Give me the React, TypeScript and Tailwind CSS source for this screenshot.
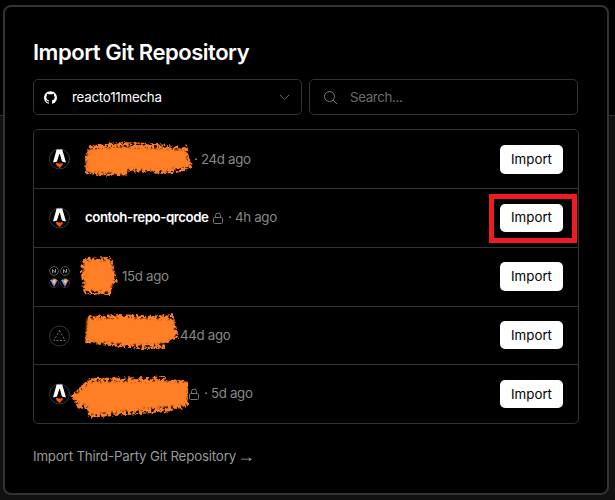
import React from "react";
import { SiGithub } from "react-icons/si";

function AstroIcon() {
  return (
    <svg width="21" height="22" viewBox="0 0 21 22" className="shrink-0">
      <circle cx="10.5" cy="11" r="10" fill="#000" stroke="#3a3a3a" />
      <path
        d="M7.600 1.600h5.600L17 14.600q-2-1-4-1.200L10.900 6h-.6L8 13.400q-2 .2-4 1.200z"
        fill="#fff"
      />
      <path d="M7 14.800q1.700.9 3.500.8t3.300-.9q.3 2.300-1.500 3.300-1 .7-1.200 2.400-1-.9-1.500-1.600-2.700-1-2.600-4z" fill="#ff5d01" />
    </svg>
  );
}

function NextDot() {
  return (
    <svg width="10" height="10" viewBox="0 0 10 10">
      <circle cx="5" cy="5" r="4.400" fill="#000" stroke="#555" />
      <path d="M3.500 7V3.500L6.500 7M6.500 3V6" fill="none" stroke="#aaa" strokeWidth=".9" />
    </svg>
  );
}

function ViteDot() {
  return (
    <svg width="10" height="10" viewBox="0 0 10 10">
      <circle cx="5" cy="5" r="4.500" fill="#000" stroke="#333" />
      <path d="M1.300 2 5 1.500 8.700 2 5 9z" fill="#b06bff" />
      <path d="M1.300 2 4 1.700 4.500 7.500z" fill="#62a8f5" />
      <path d="M4 1.500 6.800 1 6.500 4.200 5 6.200V5H4z" fill="#ffc928" />
    </svg>
  );
}

function WorkspaceIcon() {
  return (
    <div className="grid w-[21px] shrink-0 grid-cols-2 gap-x-px gap-y-0.5">
      <NextDot />
      <NextDot />
      <ViteDot />
      <ViteDot />
    </div>
  );
}

function EmptyIcon() {
  return (
    <svg width="21" height="22" viewBox="0 0 21 22" className="shrink-0">
      <circle cx="10.500" cy="11" r="10" fill="#000" stroke="#383838" />
      <path d="M10.500 5.500 16 15.500H5z" fill="none" stroke="#777" strokeDasharray="2 1.600" />
    </svg>
  );
}

function LockIcon() {
  return (
    <svg width="12" height="13" viewBox="0 0 12 13" fill="none" stroke="#777" className="shrink-0">
      <rect x="1.500" y="5.500" width="9" height="6" rx="1" />
      <path d="M3.500 5.500V3.500a2.500 2.500 0 0 1 5 0V5.500" />
    </svg>
  );
}

type Row = {
  icon: React.ReactNode;
  name?: string;
  locked?: boolean;
  gap: string;
  time: string;
  height: string;
  button: string;
  marked?: boolean;
};

const rows: Row[] = [
  { icon: <AstroIcon />, gap: "pt-px pl-[124px]", time: "· 24d ago", height: "h-[59px]", button: "h-[29px]" },
  { icon: <AstroIcon />, name: "contoh-repo-qrcode", locked: true, gap: "pl-[15px]", time: "· 4h ago", height: "h-[59px]", button: "mb-px h-[28px]", marked: true },
  { icon: <WorkspaceIcon />, gap: "pl-[52px]", time: "15d ago", height: "h-[59px]", button: "mb-px h-[29px]" },
  { icon: <EmptyIcon />, gap: "pl-[110px]", time: "44d ago", height: "h-[58px]", button: "mb-px h-[28px]" },
  { icon: <AstroIcon />, locked: true, gap: "pl-[118px]", time: "· 5d ago", height: "h-[58px]", button: "h-[28px]" },
];

function RepoRow({ row }: { row: Row }) {
  return (
    <div className={`flex items-center border-b border-[#333] pr-[15px] pl-[15px] last:border-b-0 ${row.height}`}>
      {row.icon}
      <div className={`flex items-center whitespace-nowrap ${row.gap}`}>
        {row.name && (
          <span className="mr-[3px] w-[124px] text-[13.3px] font-semibold tracking-[-0.46px] text-white">{row.name}</span>
        )}
        {row.locked && (
          <span className="mr-1">
            <LockIcon />
          </span>
        )}
        <span className="text-[13.3px] tracking-[-0.32px] text-[#888]">{row.time}</span>
      </div>
      <div className="relative ml-auto">
        <button className={`block w-[63px] rounded-[5px] bg-white text-[13.3px] leading-[27px] text-black ${row.button}`}>
          Import
        </button>
        {row.marked && <div className="absolute -top-[10px] -left-[11px] h-[49px] w-[88px] border-[5px] border-[#ed1c24]" />}
      </div>
    </div>
  );
}

/* Spray-brush strokes that hide private repository names. */
function Redactions() {
  return (
    <svg width="615" height="500" viewBox="0 0 615 500" className="pointer-events-none absolute top-0 left-0">
      <defs>
        <filter id="spray" x="-10%" y="-10%" width="120%" height="120%">
          <feTurbulence type="fractalNoise" baseFrequency=".35" numOctaves="2" seed="6" result="noise" />
          <feDisplacementMap in="SourceGraphic" in2="noise" scale="4" xChannelSelector="R" yChannelSelector="G" result="rough" />
          <feColorMatrix in="noise" type="matrix" values="0 0 0 0 0  0 0 0 0 0  0 0 0 0 0  0 0 8 0 -3" result="grain" />
          <feComposite in="rough" in2="grain" operator="in" result="porous" />
          <feGaussianBlur in="porous" stdDeviation=".6" />
        </filter>
        <filter id="soft">
          <feGaussianBlur stdDeviation=".8" />
        </filter>
      </defs>
      <g fill="#ff7f27" filter="url(#spray)">
        <path d="M90 145 120 142 150 143 182 147 187 145 192 168 182 172 165 174 127 172V176L110 176 86 174 85 156z" />
        <path d="M84 258 110 257 113 263 115 273 118 282 111 285V295L96 295 84 294 81 275V268z" />
        <path d="M88 315 120 314 150 316 173 314 179 337 165 345V349L140 349 110 346 85 343 87 328z" />
        <path d="M90 378 150 377 165 376V380L188 380V407L165 412 140 414 88 418V409L78 409 71 396 83 384z" />
      </g>
      <g fill="#ff7f27" filter="url(#soft)">
        <path d="M90 149 120 147 185 150 189 166 165 170 127 169 126 175 110 173 87 172 86 157z" />
        <path d="M84 261 109 260 113 266 114 280 110 292 86 290 83 273z" />
        <path d="M87 319 120 318 172 319 176 335 163 343 140 345 86 341z" />
        <path d="M90 382 165 381 187 383V405L140 409 89 415 88 406 78 403 74 396 85 386z" />
      </g>
    </svg>
  );
}

export default function App() {
  return (
    <div className="relative h-[500px] w-[615px] overflow-hidden bg-black bg-[linear-gradient(#000_115px,#333_115px,#333_116px,#111_116px)] pt-[5px] pl-[3px] font-['Inter','Liberation_Sans',sans-serif]">
      <main className="h-[490px] w-[606px] rounded-[8px] border-2 border-[#333] bg-black px-[28px] pt-[29px]">
        <h1 className="h-[43px] text-[22px] leading-[32px] font-semibold tracking-[-0.47px] text-white">Import Git Repository</h1>
        <div className="flex gap-[7px]">
          <div className="flex h-[36px] w-[269px] items-center rounded-[5px] border border-[#333] pr-[11px] pl-[10px]">
            <SiGithub size={13} color="#fff" />
            <span className="mt-px ml-[15px] text-[13.3px] tracking-[-0.22px] text-white">reacto11mecha</span>
            <svg width="11" height="7" viewBox="0 0 11 7" fill="none" stroke="#666" className="ml-auto">
              <path d="M1 1 5.500 5.500 10 1" />
            </svg>
          </div>
          <div className="flex h-[36px] w-[269px] items-center rounded-[5px] border border-[#333] pl-[13px]">
            <svg width="15" height="15" viewBox="0 0 15 15" fill="none" stroke="#777">
              <circle cx="6.500" cy="6.500" r="5" />
              <path d="m10 10 4 4" />
            </svg>
            <span className="mt-px ml-3 text-[13.3px] tracking-[-0.35px] text-[#6c6c6c]">Search...</span>
          </div>
        </div>
        <section className="mt-[14px] w-[546px] rounded-[5px] border border-[#333]">
          {rows.map((row) => (
            <RepoRow key={row.time} row={row} />
          ))}
        </section>
        <a className="mt-[22px] flex h-5 items-center text-[13.3px] leading-5 tracking-[-0.18px] text-[#999]">
          Import Third-Party Git Repository
          <span className="ml-px font-['Liberation_Sans'] text-[18px] leading-5">→</span>
        </a>
      </main>
      <Redactions />
    </div>
  );
}
